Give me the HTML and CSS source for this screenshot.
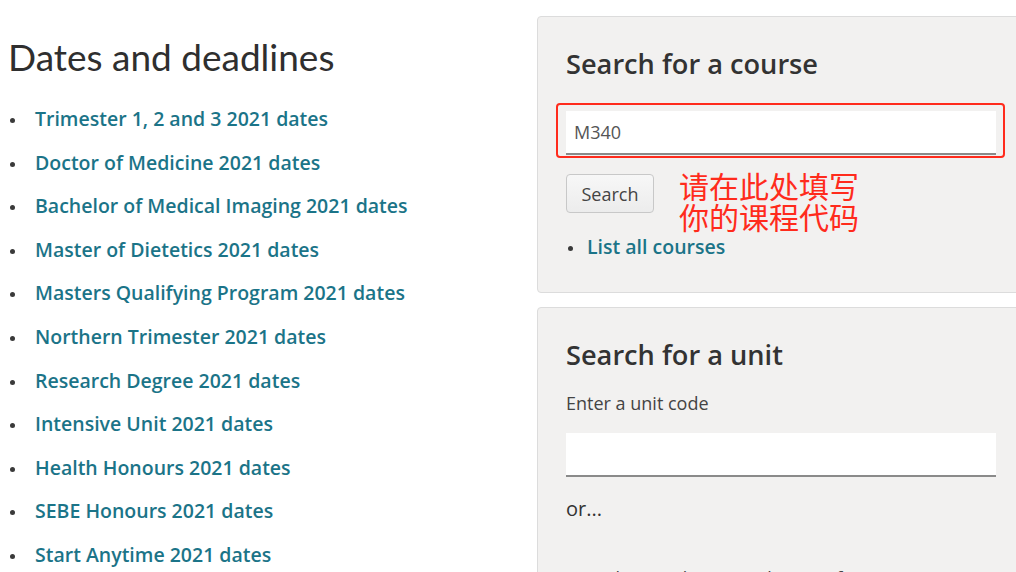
FILE: index.html
```html
<!DOCTYPE html>
<html lang="en">
<head>
  <meta charset="UTF-8" />
  <meta name="viewport" content="width=device-width, initial-scale=1.0"/>
  <title>Dates and deadlines</title>
  <link rel="stylesheet" href="styles.css">
</head>
<body>
  <div class="page">
    <div class="main">
      <h1>Dates and deadlines</h1>
      <ul class="links">
        <li><a href="#">Trimester 1, 2 and 3 2021 dates</a></li>
        <li><a href="#">Doctor of Medicine 2021 dates</a></li>
        <li><a href="#">Bachelor of Medical Imaging 2021 dates</a></li>
        <li><a href="#">Master of Dietetics 2021 dates</a></li>
        <li><a href="#">Masters Qualifying Program 2021 dates</a></li>
        <li><a href="#">Northern Trimester 2021 dates</a></li>
        <li><a href="#">Research Degree 2021 dates</a></li>
        <li><a href="#">Intensive Unit 2021 dates</a></li>
        <li><a href="#">Health Honours 2021 dates</a></li>
        <li><a href="#">SEBE Honours 2021 dates</a></li>
        <li><a href="#">Start Anytime 2021 dates</a></li>
      </ul>
    </div>
    <div class="side">
      <div class="panel">
        <h2>Search for a course</h2>
        <div class="field">
          <input type="text" value="M340">
          <div class="mark"></div>
        </div>
        <div class="actions">
          <button>Search</button>
          <div class="note">
            <div>请在此处填写</div>
            <div>你的课程代码</div>
          </div>
        </div>
        <ul class="links small">
          <li><a href="#">List all courses</a></li>
        </ul>
      </div>
      <div class="panel">
        <h2>Search for a unit</h2>
        <label>Enter a unit code</label>
        <div class="field">
          <input type="text">
        </div>
        <p class="or">or...</p>
        <p class="label2">Enter keywords to search unit information</p>
      </div>
    </div>
  </div>
</body>
</html>
```

FILE: styles.css
```css
html, body { overflow: hidden; }
body {
  margin: 0;
  font-family: "Open Sans", "Noto Sans", sans-serif;
  color: #333;
  background: #fff;
}
.page {
  display: flex;
  align-items: flex-start;
  width: 1090px;
}
.main { width: 537px; flex-shrink: 0; padding: 34px 0 0 8px; box-sizing: border-box; }
h1 {
  margin: 0 0 26px;
  font-family: Lato, "Open Sans", sans-serif;
  font-weight: 400;
  font-size: 37px;
  line-height: 46px;
  color: #2f2f2f;
}
.links { margin: 0; padding: 0 0 0 27px; list-style: none; }
.links li {
  position: relative;
  font-size: 19.5px;
  line-height: 26px;
  margin-bottom: 17.6px;
}
.links li::before {
  content: "";
  position: absolute;
  left: -25px; top: 12px;
  width: 5px; height: 5px;
  border-radius: 50%;
  background: #3a3a3a;
}
.links a {
  color: #1b7488;
  font-weight: 600;
  text-decoration: none;
}
.side { width: 550px; flex-shrink: 0; padding-top: 16px; }
.panel {
  background: #f2f1f0;
  border: 1px solid #dcdcdc;
  border-radius: 4px;
  padding: 27px 28px 32px;
  margin-bottom: 14px;
}
h2 {
  margin: 0 0 22px;
  font-size: 27.2px;
  font-weight: 600;
  line-height: 40px;
  color: #333;
}
.panel:first-child h2 { margin-bottom: 27px; }
.field { position: relative; width: 430px; }
.field input {
  display: block;
  width: 100%;
  height: 44px;
  box-sizing: border-box;
  border: none;
  border-bottom: 2px solid #8a8a8a;
  background: #fff;
  padding: 0 8px;
  font-family: "Open Sans", sans-serif;
  font-size: 18px;
  color: #555;
}
.mark {
  position: absolute;
  left: -10px; top: -8px; right: -9px; bottom: -3px;
  border: 2px solid #ff2b1c;
  border-radius: 4px;
}
.actions { display: flex; align-items: flex-start; margin-top: 18px; }
.actions button {
  width: 88px;
  height: 39px;
  border: 1px solid #c8c8c8;
  border-radius: 4px;
  background: linear-gradient(#f7f7f7, #ececec);
  font-family: "Open Sans", sans-serif;
  font-size: 18px;
  color: #444;
  margin-top: 1px;
}
.note {
  margin-left: 25px;
  color: #ff2b1c;
  font-family: "Noto Sans CJK SC", sans-serif;
  font-size: 30px;
  line-height: 31px;
  margin-top: -3px;
}
.links.small { margin-top: 2px; padding-left: 21px; }
.links.small li { font-size: 19.5px; margin-bottom: 0; }
.links.small li::before { left: -19px; }
label { display: block; font-size: 18px; color: #444; margin: -6px 0 18px; }
.or { margin: 18px 0 0; font-size: 20px; }
.label2 { margin: 44px 0 0; font-size: 18px; color: #444; }
```
